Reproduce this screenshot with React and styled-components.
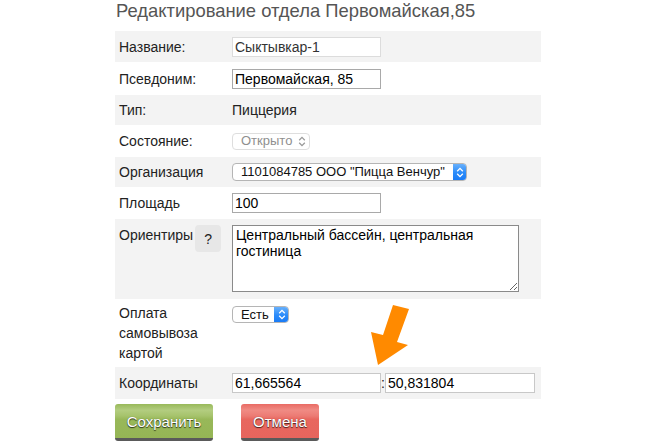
import React from 'react'
import styled, { createGlobalStyle } from 'styled-components'

const GlobalStyle = createGlobalStyle`
    body {
        margin: 0;
        background: #fff;
        font-family: "Liberation Sans", Arial, sans-serif;
    }
`

const Page = styled.div`
    position: relative;
    width: 650px;
    height: 448px;
    box-sizing: border-box;
    padding-left: 115px;
    overflow: hidden;
`

const Title = styled.h1`
    margin: 0 0 9px 1px;
    font-size: 18.4px;
    line-height: 22px;
    font-weight: normal;
    color: #555;
`

const Table = styled.div`
    width: 426px;
    display: flex;
    flex-direction: column;
`

const Row = styled.div`
    display: grid;
    grid-template-columns: 117px 1fr;
    height: ${p => p.$h}px;
    box-sizing: border-box;
    padding-top: ${p => p.$pt || 0}px;
    align-items: ${p => (p.$pt ? 'start' : 'center')};
    background: ${p => (p.$alt ? '#f3f3f3' : 'transparent')};
`

const Label = styled.div`
    display: flex;
    align-items: flex-start;
    gap: 2px;
    padding-left: 4px;
    font-size: 14px;
    line-height: 20px;
    color: #222;
`

const Value = styled.div`
    display: flex;
    align-items: center;
    padding-top: ${p => p.$pt || 0}px;
    font-size: 14px;
    line-height: 20px;
    color: #222;
`

const borders = { light: '#dcdcdc', coord: '#c8c8c8', normal: '#a9a9a9' }

const Input = styled.input`
    width: ${p => p.$w || 149}px;
    height: 20px;
    box-sizing: border-box;
    margin: 0;
    padding: 0 2px;
    border: 1px solid ${p => borders[p.$tone || 'normal']};
    font-family: "Liberation Sans", Arial, sans-serif;
    font-size: 14px;
    color: ${p => (p.$tone === 'light' ? '#333' : '#000')};
    background: #fff;
    outline: none;
`

const Colon = styled.span`
    width: 4px;
    text-align: center;
    color: #222;
`

const TextArea = styled.textarea`
    width: 287px;
    height: 67px;
    box-sizing: border-box;
    margin: 0;
    padding: 1px 3px;
    border: 1px solid #8a8a8a;
    font-family: "Liberation Sans", Arial, sans-serif;
    font-size: 14px;
    line-height: 16px;
    color: #000;
    resize: both;
    outline: none;
`

const HelpButton = styled.div`
    width: 26px;
    height: 27px;
    border-radius: 4px;
    background: #e7e7e7;
    display: flex;
    align-items: center;
    justify-content: center;
    font-size: 14px;
    color: #222;
`

const Select = styled.div`
    position: relative;
    width: ${p => p.$w}px;
    height: ${p => p.$h || 17}px;
    box-sizing: border-box;
    display: flex;
    align-items: center;
    padding-left: 8px;
    border: 1px solid ${p => (p.$disabled ? '#dedede' : '#b5b5b5')};
    border-radius: 4px;
    background: #fff;
    font-size: 13px;
    color: ${p => (p.$disabled ? '#8f8f8f' : '#111')};
    white-space: nowrap;
    overflow: hidden;
`

const SelectArrow = styled.div`
    position: absolute;
    top: -1px;
    right: -1px;
    bottom: -1px;
    width: ${p => p.$w || 15}px;
    display: flex;
    align-items: center;
    justify-content: center;
    border-radius: 0 4px 4px 0;
    background: ${p => (p.$blue ? 'linear-gradient(#6fb4fb, #2a8bfa 55%, #1879f5)' : 'transparent')};
    color: ${p => (p.$blue ? '#fff' : '#9a9a9a')};
`

const Buttons = styled.div`
    display: flex;
    gap: 28px;
    margin-top: 5px;
`

const Button = styled.div`
    width: ${p => p.$w}px;
    height: 37px;
    box-sizing: border-box;
    border-radius: 3px;
    border-bottom: 3px solid #5a5a5a;
    display: flex;
    align-items: center;
    justify-content: center;
    font-size: 15px;
    color: #fff;
    text-shadow: 0 1px 1px rgba(0, 0, 0, 0.7), 0 0 1px rgba(0, 0, 0, 0.4);
    background: ${p => (p.$red
        ? 'linear-gradient(#e96b64, #f08b84 18%, #ec7b74 35%, #e8675f 45%, #e6655d)'
        : 'linear-gradient(#98b95a, #b3cd80 18%, #a6c36c 35%, #98b859 45%, #95b555)')};
`

const Arrow = styled.svg`
    position: absolute;
    left: 368px;
    top: 302px;
`

function Chevrons() {
    return (
        <svg width="8" height="11" viewBox="0 0 8 11" fill="none" stroke="currentColor" strokeWidth="1.3">
            <path d="M1.2 4.2 L4 1.4 L6.8 4.2" />
            <path d="M1.2 6.8 L4 9.6 L6.8 6.8" />
        </svg>
    )
}

export default function App() {
    return (
        <Page>
            <GlobalStyle />
            <Title>Редактирование отдела Первомайская,85</Title>
            <Table>
                <Row $h={31} $alt>
                    <Label>Название:</Label>
                    <Value><Input $tone="light" defaultValue="Сыктывкар-1" /></Value>
                </Row>
                <Row $h={33}>
                    <Label>Псевдоним:</Label>
                    <Value><Input defaultValue="Первомайская, 85" /></Value>
                </Row>
                <Row $h={30} $alt>
                    <Label>Тип:</Label>
                    <Value>Пиццерия</Value>
                </Row>
                <Row $h={32}>
                    <Label>Состояние:</Label>
                    <Value>
                        <Select $w={78} $disabled>
                            Открыто
                            <SelectArrow $w={16}><Chevrons /></SelectArrow>
                        </Select>
                    </Value>
                </Row>
                <Row $h={30} $alt>
                    <Label>Организация</Label>
                    <Value>
                        <Select $w={235} $h={18}>
                            1101084785 ООО "Пицца Венчур"
                            <SelectArrow $blue $w={14}><Chevrons /></SelectArrow>
                        </Select>
                    </Value>
                </Row>
                <Row $h={32}>
                    <Label>Площадь</Label>
                    <Value><Input defaultValue="100" /></Value>
                </Row>
                <Row $h={80} $pt={6} $alt>
                    <Label>
                        <span>Ориентиры</span>
                        <HelpButton>?</HelpButton>
                    </Label>
                    <Value>
                        <TextArea defaultValue="Центральный бассейн, центральная гостиница" />
                    </Value>
                </Row>
                <Row $h={68} $pt={4}>
                    <Label>Оплата самовывоза картой</Label>
                    <Value $pt={3}>
                        <Select $w={57}>
                            Есть
                            <SelectArrow $blue $w={15}><Chevrons /></SelectArrow>
                        </Select>
                    </Value>
                </Row>
                <Row $h={32} $alt>
                    <Label>Координаты</Label>
                    <Value>
                        <Input $tone="coord" defaultValue="61,665564" />
                        <Colon>:</Colon>
                        <Input $tone="coord" $w={150} defaultValue="50,831804" />
                    </Value>
                </Row>
            </Table>
            <Buttons>
                <Button $w={98}>Сохранить</Button>
                <Button $w={78} $red>Отмена</Button>
            </Buttons>
            <Arrow width="44" height="66" viewBox="0 0 44 66">
                <polygon points="25,3 41,7 29,40 40,43 10,63 3,30 15,33" fill="#ff8a00" />
            </Arrow>
        </Page>
    )
}
